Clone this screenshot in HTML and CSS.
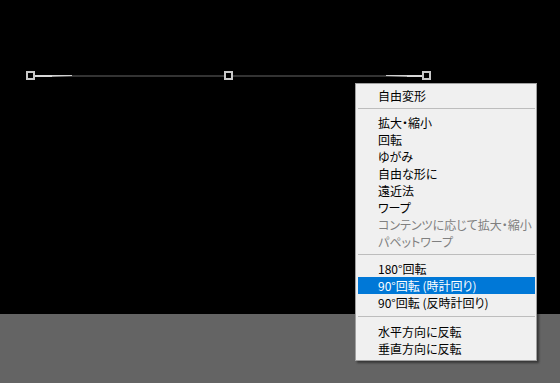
FILE: index.html
```html
<!DOCTYPE html>
<html lang="ja">
<head>
<meta charset="utf-8">
<link rel="stylesheet" href="styles.css">
</head>
<body>
<div class="stage">
  <div class="canvas">
    <svg class="transform" width="560" height="314" viewBox="0 0 560 314">
      <defs>
        <linearGradient id="fadeL" x1="0" x2="1">
          <stop offset="0" stop-color="#9a9a9a"/>
          <stop offset="1" stop-color="#333"/>
        </linearGradient>
        <linearGradient id="fadeR" x1="0" x2="1">
          <stop offset="0" stop-color="#333"/>
          <stop offset="1" stop-color="#9a9a9a"/>
        </linearGradient>
      </defs>
      <rect x="35" y="75" width="387" height="2" fill="#333"/>
      <rect x="35" y="75" width="17" height="2" fill="#d8d8d8"/>
      <rect x="52" y="75" width="20" height="1" fill="#d0d0d0"/>
      <rect x="52" y="76" width="20" height="1" fill="url(#fadeL)"/>
      <rect x="386" y="75" width="21" height="1" fill="#d0d0d0"/>
      <rect x="386" y="76" width="21" height="1" fill="url(#fadeR)"/>
      <rect x="407" y="75" width="15" height="2" fill="#d8d8d8"/>
      <rect x="27" y="72" width="7" height="7" fill="#000" stroke="#c8c8c8" stroke-width="2"/>
      <rect x="225" y="72" width="7" height="7" fill="#000" stroke="#c8c8c8" stroke-width="2"/>
      <rect x="423" y="72" width="7" height="7" fill="#000" stroke="#c8c8c8" stroke-width="2"/>
    </svg>
  </div>
  <div class="floor"></div>

  <ul class="menu">
    <li class="item">自由変形</li>
    <li class="sep"></li>
    <li class="item">拡大・縮小</li>
    <li class="item">回転</li>
    <li class="item">ゆがみ</li>
    <li class="item">自由な形に</li>
    <li class="item">遠近法</li>
    <li class="item">ワープ</li>
    <li class="item disabled">コンテンツに応じて拡大・縮小</li>
    <li class="item disabled">パペットワープ</li>
    <li class="sep"></li>
    <li class="item">180°回転</li>
    <li class="item active">90°回転 (時計回り)</li>
    <li class="item">90°回転 (反時計回り)</li>
    <li class="sep sep-wide"></li>
    <li class="item">水平方向に反転</li>
    <li class="item">垂直方向に反転</li>
  </ul>
</div>
</body>
</html>
```

FILE: styles.css
```css
html, body {
  margin: 0;
  padding: 0;
  background: #646464;
}
.stage {
  position: relative;
  width: 560px;
  height: 383px;
  display: flex;
  flex-direction: column;
  overflow: hidden;
}
.canvas {
  height: 314px;
  background: #000;
  flex: none;
}
.transform {
  display: block;
}
.floor {
  flex: 1;
  background: #646464;
}
.menu {
  position: absolute;
  left: 355px;
  top: 83px;
  width: 182px;
  box-sizing: border-box;
  margin: 0;
  padding: 3px 1px 3px 2px;
  list-style: none;
  background: #f0f0f0;
  border: 1px solid #a0a0a0;
  box-shadow: 2px 2px 2px rgba(0, 0, 0, 0.45);
  font-family: "Noto Sans CJK JP", "Noto Sans", sans-serif;
  font-feature-settings: "palt";
  font-size: 12px;
  color: #000;
}
.item {
  height: 17px;
  line-height: 17px;
  padding-left: 20px;
  white-space: nowrap;
}
.item.disabled {
  color: #808080;
}
.item.active {
  background: #0078d7;
  color: #fff;
}
.sep {
  height: 1px;
  margin: 4px 0 5px 0;
  background: #bdbdbd;
}
.sep-wide {
  margin: 5px 0 6px 0;
}
```
